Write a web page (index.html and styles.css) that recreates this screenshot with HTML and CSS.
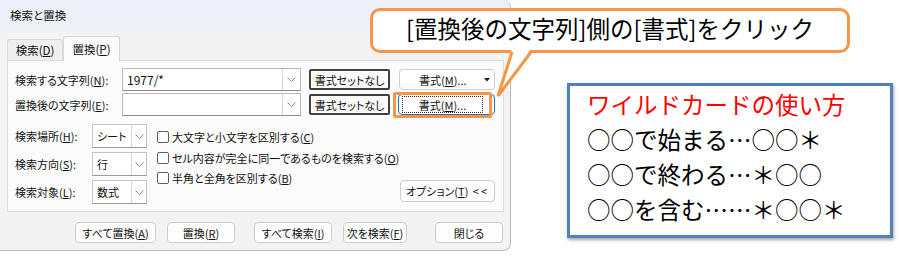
FILE: index.html
```html
<!DOCTYPE html>
<html lang="ja">
<head>
<meta charset="utf-8">
<title>検索と置換</title>
<link rel="stylesheet" href="styles.css">
</head>
<body>
<div class="page">
  <div class="dialog">
    <div class="titlebar"><span>検索と置換</span></div>
    <div class="tabs">
      <div class="tab"><span>検索(<u>D</u>)</span></div>
      <div class="tab active"><span>置換(<u>P</u>)</span></div>
    </div>
    <div class="panel">
      <div class="row">
        <div class="label">検索する文字列(<u>N</u>):</div>
        <div class="combo"><span class="combo-text">1977/*</span><span class="combo-arrow"><svg width="9" height="5" viewBox="0 0 9 5"><polyline points="0.5,0.5 4.5,4.5 8.5,0.5" fill="none" stroke="#8a8a8a" stroke-width="1"/></svg></span></div>
        <div class="btn-dark"><span>書式セットなし</span></div>
        <div class="btn-fmt"><span>書式(<u>M</u>)...</span><svg class="caret" width="6" height="4" viewBox="0 0 6 4"><polygon points="0,0 6,0 3,3.5" fill="#222"/></svg></div>
      </div>
      <div class="row">
        <div class="label">置換後の文字列(<u>E</u>):</div>
        <div class="combo"><span class="combo-text"></span><span class="combo-arrow"><svg width="9" height="5" viewBox="0 0 9 5"><polyline points="0.5,0.5 4.5,4.5 8.5,0.5" fill="none" stroke="#8a8a8a" stroke-width="1"/></svg></span></div>
        <div class="btn-dark"><span>書式セットなし</span></div>
        <div class="btn-fmt focused"><span class="focus-ring"><span>書式(<u>M</u>)...</span></span></div>
      </div>
      <div class="options">
        <div class="selects">
          <div class="sel-row"><div class="label2">検索場所(<u>H</u>):</div><div class="select"><span class="sel-text">シート</span><span class="sel-arrow"><svg width="9" height="5" viewBox="0 0 9 5"><polyline points="0.5,0.5 4.5,4.5 8.5,0.5" fill="none" stroke="#8a8a8a" stroke-width="1"/></svg></span></div></div>
          <div class="sel-row"><div class="label2">検索方向(<u>S</u>):</div><div class="select"><span class="sel-text">行</span><span class="sel-arrow"><svg width="9" height="5" viewBox="0 0 9 5"><polyline points="0.5,0.5 4.5,4.5 8.5,0.5" fill="none" stroke="#8a8a8a" stroke-width="1"/></svg></span></div></div>
          <div class="sel-row"><div class="label2">検索対象(<u>L</u>):</div><div class="select"><span class="sel-text">数式</span><span class="sel-arrow"><svg width="9" height="5" viewBox="0 0 9 5"><polyline points="0.5,0.5 4.5,4.5 8.5,0.5" fill="none" stroke="#8a8a8a" stroke-width="1"/></svg></span></div></div>
        </div>
        <div class="checks">
          <div class="check"><span class="box"></span><span>大文字と小文字を区別する(<u>C</u>)</span></div>
          <div class="check"><span class="box"></span><span>セル内容が完全に同一であるものを検索する(<u>O</u>)</span></div>
          <div class="check"><span class="box"></span><span>半角と全角を区別する(<u>B</u>)</span></div>
        </div>
        <div class="btn opt"><span>オプション(<u>T</u>) <span class="ltlt">&lt;&lt;</span></span></div>
      </div>
    </div>
    <div class="actions">
      <div class="btn w81"><span>すべて置換(<u>A</u>)</span></div>
      <div class="btn w68 g11"><span>置換(<u>R</u>)</span></div>
      <div class="btn w78 g19"><span>すべて検索(<u>I</u>)</span></div>
      <div class="btn w64 g11"><span>次を検索(<u>F</u>)</span></div>
      <div class="btn w68 g28"><span>閉じる</span></div>
    </div>
  </div>

  <div class="tipbox">
    <div class="tip-title">ワイルドカードの使い方</div>
    <div>○○で始まる…○○＊</div>
    <div>○○で終わる…＊○○</div>
    <div>○○を含む……＊○○＊</div>
  </div>

  <div class="callout">[置換後の文字列]側の[書式]をクリック</div>
  <svg class="tail" width="900" height="256" viewBox="0 0 900 256">
    <polygon points="512,49 498,96 531,49" fill="#fff"/>
    <polyline points="512,52 498,96 531,52" fill="none" stroke="#f79646" stroke-width="3" stroke-linejoin="miter"/>
  </svg>
  <div class="highlight"></div>
</div>
</body>
</html>
```

FILE: styles.css
```css
html, body {
  margin: 0;
  padding: 0;
  background: #ffffff;
}

.page {
  position: relative;
  width: 900px;
  height: 256px;
  overflow: hidden;
  display: flex;
  align-items: flex-start;
}

.dialog {
  flex: none;
  width: 511px;
  height: 251px;
  box-sizing: border-box;
  background: #f3f3f3;
  border-right: 1px solid #b9b9b9;
  border-bottom: 1px solid #b9b9b9;
  border-radius: 0 8px 8px 0;
  overflow: hidden;
  font-family: "Noto Sans CJK JP", sans-serif;
  font-size: 11px;
  color: #111;
  font-feature-settings: "palt" 1;
  white-space: nowrap;
}

u {
  text-underline-offset: 1px;
}

.ltlt {
  letter-spacing: 2px;
  margin-left: 2px;
}

.titlebar {
  height: 30px;
  background: #eef0f7;
  padding-left: 10px;
  display: flex;
  align-items: center;
  font-size: 11.5px;
}

.tabs {
  position: relative;
  z-index: 1;
  height: 31px;
  margin-bottom: -1px;
  padding-left: 7px;
  display: flex;
  align-items: flex-end;
  font-size: 11.5px;
}

.tab {
  box-sizing: border-box;
  width: 56px;
  height: 21px;
  margin-bottom: 1px;
  border: 1px solid #d9d9d9;
  border-bottom: none;
  border-radius: 3px 3px 0 0;
  background: #efefef;
  display: flex;
  align-items: center;
  justify-content: center;
}

.tab.active {
  width: 57px;
  height: 25px;
  margin-bottom: 0;
  background: #fbfbfb;
}

.panel {
  box-sizing: border-box;
  margin-left: 7px;
  width: 497px;
  height: 152px;
  background: #fbfbfb;
  border: 1px solid #dedede;
  padding: 7px 0 0 7px;
}

.row {
  display: flex;
  align-items: center;
  height: 23px;
}

.row + .row {
  margin-top: 2px;
}

.label {
  width: 107px;
  flex: none;
}

.combo {
  flex: none;
  box-sizing: border-box;
  width: 179px;
  height: 23px;
  background: #fff;
  border: 1px solid #b8b8b8;
  border-bottom-color: #8d8d8d;
  display: flex;
}

.combo-text {
  flex: 1;
  padding-left: 4px;
  display: flex;
  align-items: center;
  font-size: 12px;
}

.combo-arrow,
.sel-arrow {
  width: 17px;
  border-left: 1px solid #d6d6d6;
  display: flex;
  align-items: center;
  justify-content: center;
}

.sel-arrow {
  width: 14px;
}

.btn-dark {
  flex: none;
  box-sizing: border-box;
  width: 81px;
  height: 21px;
  margin-left: 8px;
  border: 2px solid #3f3f3f;
  border-radius: 2px;
  background: #fbfbfb;
  display: flex;
  align-items: center;
  justify-content: center;
}

.btn-fmt {
  flex: none;
  box-sizing: border-box;
  width: 96px;
  height: 21px;
  margin-left: 9px;
  padding-left: 19px;
  border: 1px solid #cfcfcf;
  border-radius: 4px;
  background: #fff;
  display: flex;
  align-items: center;
}

.caret {
  margin-left: auto;
  margin-right: 4px;
}

.btn-fmt.focused {
  width: 97px;
  margin-left: 8px;
  padding-left: 3px;
  border-color: #1a73c8;
}

.focus-ring {
  box-sizing: border-box;
  width: 81px;
  height: 17px;
  border: 1px dotted #333;
  display: flex;
  align-items: center;
  justify-content: center;
}

.options {
  display: flex;
  margin-top: 8px;
  height: 80px;
}

.selects {
  flex: none;
  display: flex;
  flex-direction: column;
  gap: 4px;
}

.sel-row {
  display: flex;
  align-items: center;
  height: 24px;
}

.label2 {
  width: 77px;
}

.select {
  box-sizing: border-box;
  width: 55px;
  height: 24px;
  background: #fff;
  border: 1px solid #c4c4c4;
  border-bottom-color: #9a9a9a;
  display: flex;
}

.sel-text {
  flex: 1;
  padding-left: 4px;
  display: flex;
  align-items: center;
}

.checks {
  flex: 1;
  margin-left: 10px;
  padding-top: 3px;
  display: flex;
  flex-direction: column;
}

.check {
  height: 20.5px;
  display: flex;
  align-items: center;
}

.box {
  flex: none;
  box-sizing: border-box;
  width: 12px;
  height: 12px;
  margin-right: 3px;
  border: 1px solid #5f5f5f;
  border-radius: 2px;
  background: #fff;
}

.btn {
  box-sizing: border-box;
  height: 21px;
  border: 1px solid #cdcdcd;
  border-radius: 4px;
  background: #fdfdfd;
  display: flex;
  align-items: center;
  justify-content: center;
}

.opt {
  flex: none;
  align-self: flex-end;
  width: 95px;
  height: 22px;
  margin: 0 8px 2px 0;
}

.actions {
  display: flex;
  margin-top: 10px;
  padding-left: 75px;
}

.w81 { width: 81px; }
.w78 { width: 78px; }
.w68 { width: 68px; }
.w64 { width: 64px; }
.g11 { margin-left: 11px; }
.g19 { margin-left: 19px; }
.g28 { margin-left: 28px; }

.tipbox {
  flex: none;
  box-sizing: border-box;
  width: 326px;
  height: 155px;
  margin: 83px 0 0 56px;
  padding: 1px 0 0 17px;
  border: 3px solid #4f81bd;
  box-shadow: 1px 2px 3px rgba(0, 0, 0, 0.35);
  background: #fff;
  font-family: "Noto Sans CJK JP", sans-serif;
  font-size: 23.5px;
  line-height: 35px;
  color: #000;
  white-space: nowrap;
}

.tip-title {
  color: #ff0000;
}

.callout {
  position: absolute;
  left: 370px;
  top: 8px;
  box-sizing: border-box;
  width: 480px;
  height: 45px;
  padding-bottom: 4px;
  border: 3px solid #f79646;
  border-radius: 10px;
  background: #fff;
  font-family: "Noto Sans CJK JP", sans-serif;
  font-size: 23.5px;
  line-height: 35px;
  color: #000;
  text-align: center;
  white-space: nowrap;
}

.tail {
  position: absolute;
  left: 0;
  top: 0;
  pointer-events: none;
}

.highlight {
  position: absolute;
  left: 393px;
  top: 92px;
  box-sizing: border-box;
  width: 99px;
  height: 26px;
  border: 3px solid #f79646;
  border-radius: 2px;
}
```
